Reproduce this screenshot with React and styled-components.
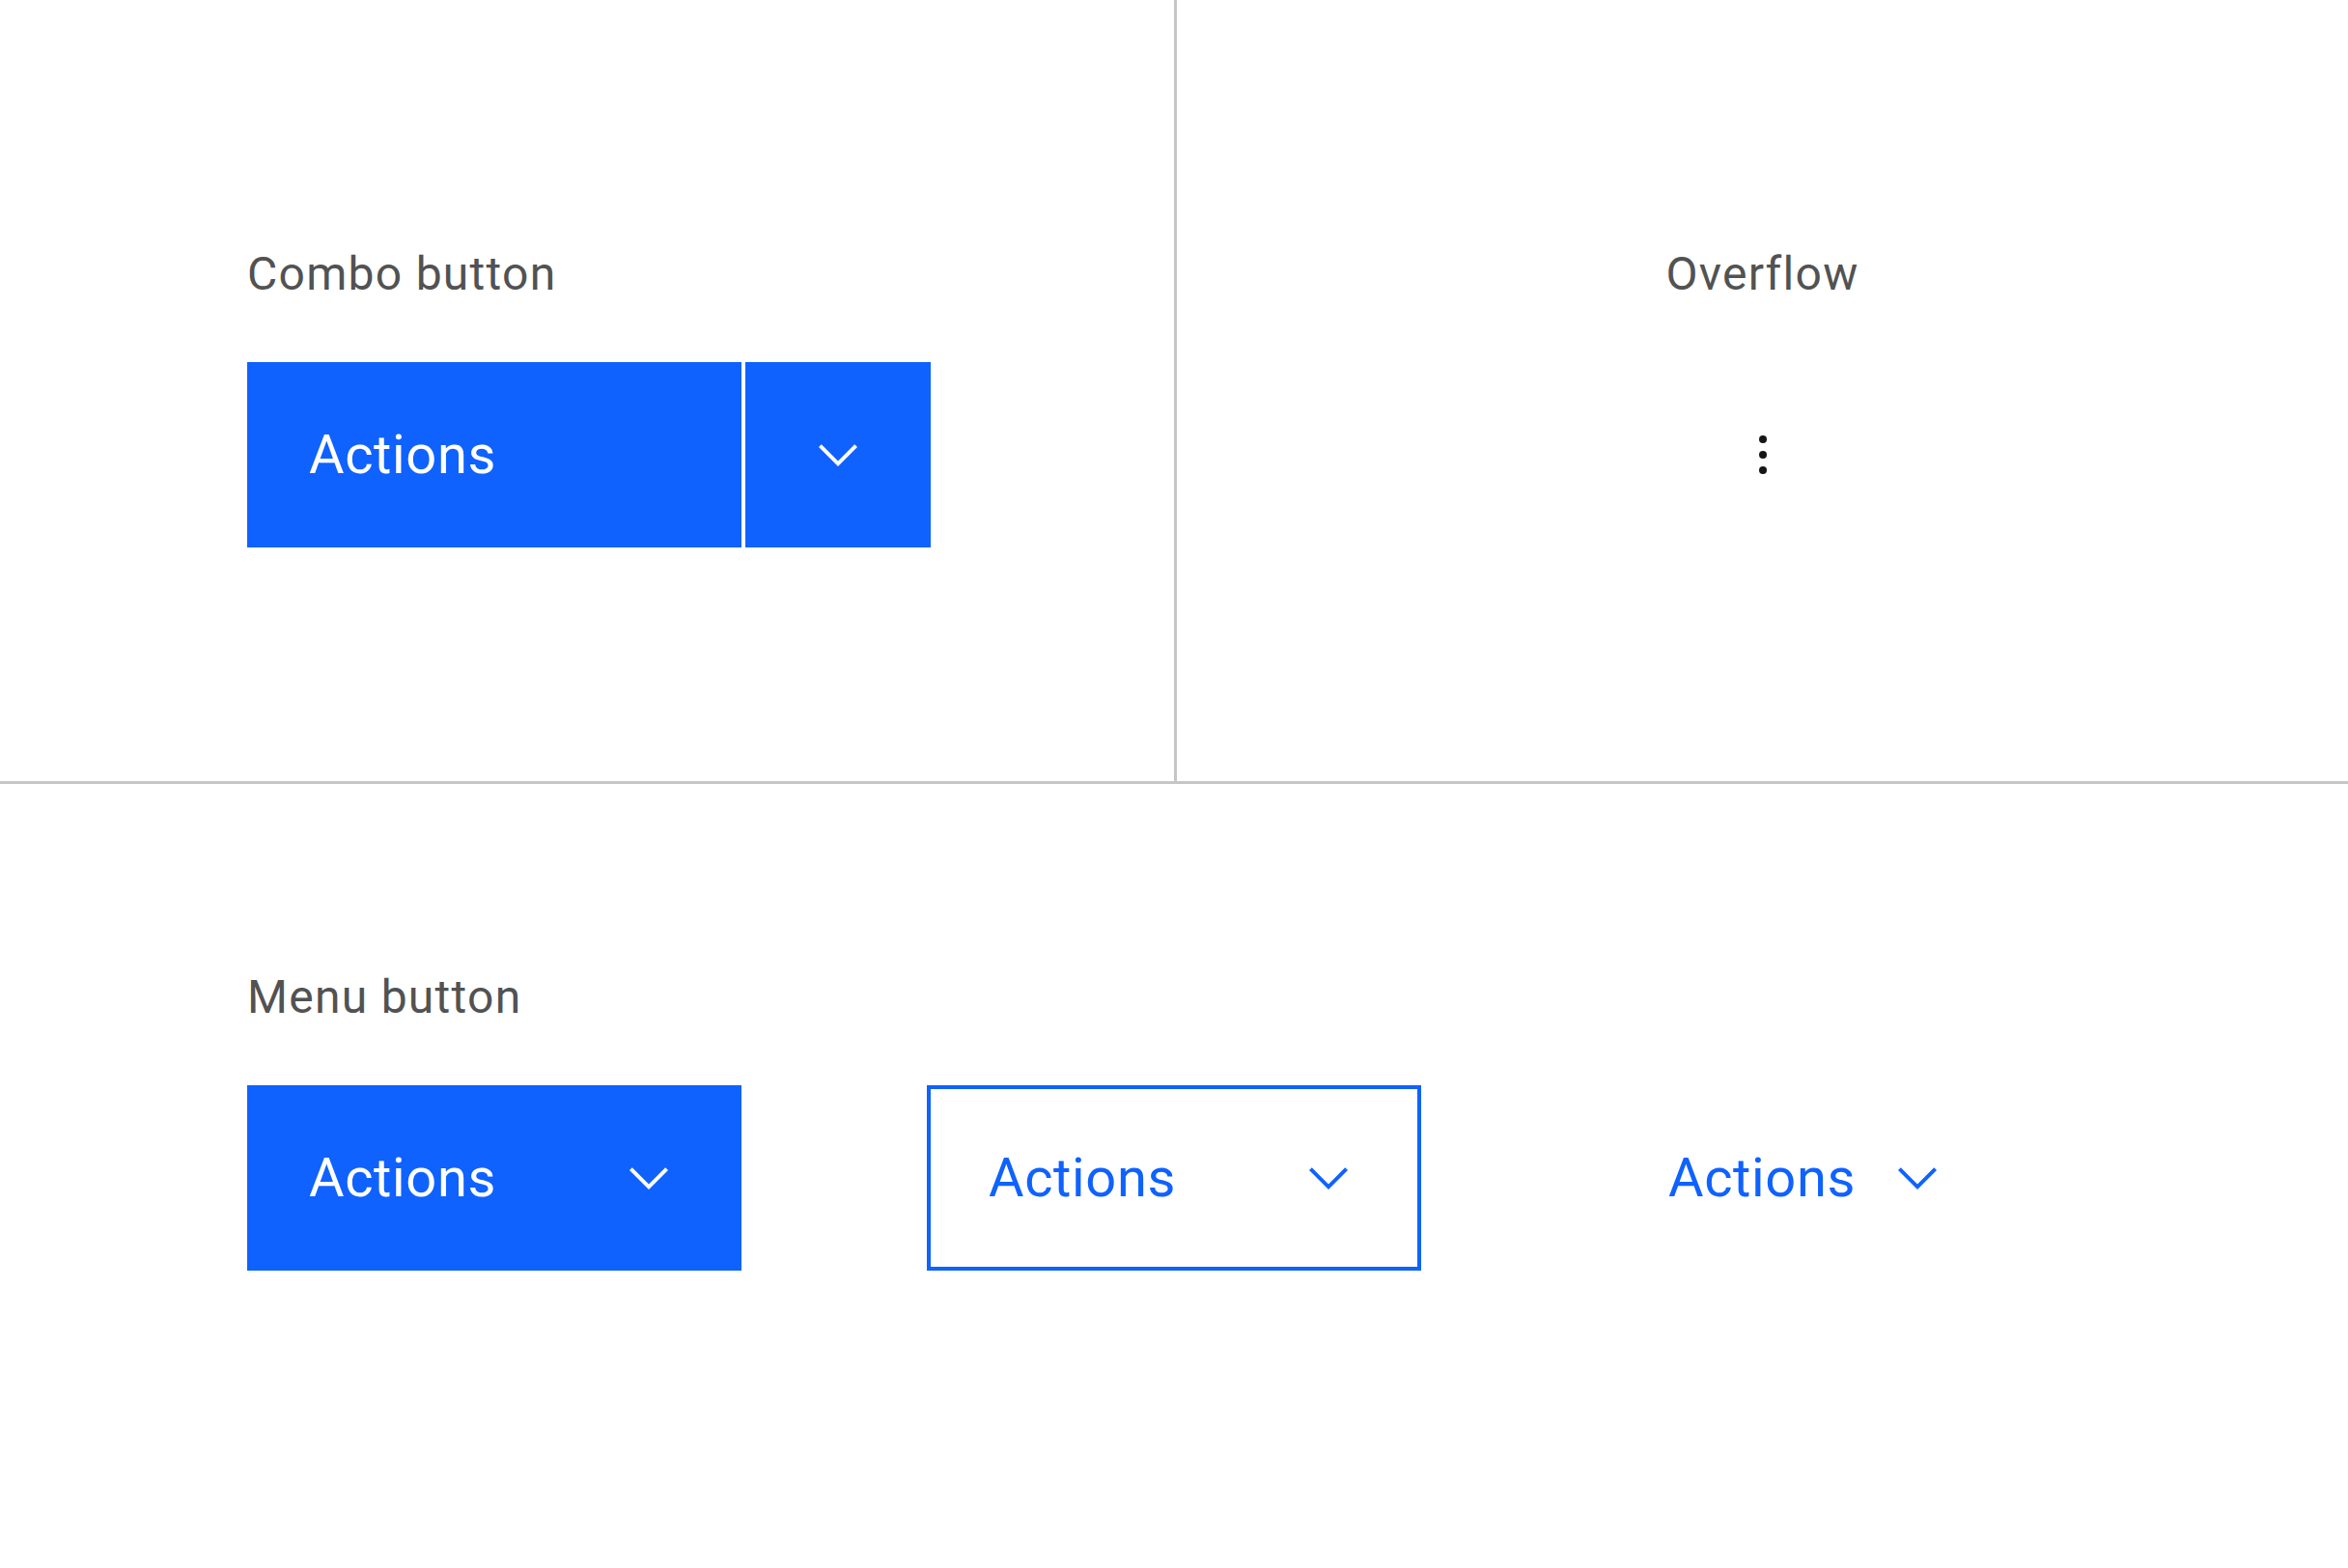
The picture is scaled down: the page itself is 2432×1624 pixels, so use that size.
import React from 'react';
import styled, { createGlobalStyle } from 'styled-components';

const GlobalStyle = createGlobalStyle`
  html, body {
    margin: 0;
    padding: 0;
    background: #ffffff;
  }
  body {
    font-family: Roboto, "Liberation Sans", sans-serif;
  }
  * {
    box-sizing: border-box;
  }
`;

const Page = styled.div`
  width: 2432px;
  height: 1624px;
  display: grid;
  grid-template-rows: 812px 812px;
  background: #ffffff;
`;

const TopRow = styled.div`
  display: grid;
  grid-template-columns: 1219px 1fr;
  border-bottom: 3px solid #c6c6c6;
`;

const Cell = styled.section`
  display: flex;
  flex-direction: column;
  align-items: ${props => (props.$center ? 'center' : 'flex-start')};
  padding-top: ${props => props.$top}px;
  padding-left: ${props => (props.$center ? 0 : 256)}px;
  border-right: ${props => (props.$divider ? '3px solid #c6c6c6' : 'none')};
`;

const Label = styled.div`
  font-size: 48px;
  line-height: 64px;
  letter-spacing: 1.28px;
  color: #525252;
  margin-bottom: 59px;
`;

const ButtonRow = styled.div`
  display: flex;
  align-items: center;
  gap: 192px;
`;

const Combo = styled.div`
  display: flex;
  gap: 4px;
`;

const Button = styled.button`
  height: 192px;
  width: ${props => (props.$width ? `${props.$width}px` : 'auto')};
  display: flex;
  align-items: center;
  justify-content: ${props => (props.$iconOnly ? 'center' : 'space-between')};
  gap: 32px;
  padding: 0 ${props => (props.$iconOnly ? 0 : 64)}px;
  margin: 0;
  font-family: Roboto, "Liberation Sans", sans-serif;
  font-size: 56px;
  font-weight: 400;
  letter-spacing: 0.64px;
  border-radius: 0;
  cursor: pointer;
  background: ${props => (props.$kind === 'primary' ? '#0f62fe' : 'transparent')};
  color: ${props => {
    if (props.$kind === 'primary') return '#ffffff';
    if (props.$kind === 'icon') return '#161616';
    return '#0f62fe';
  }};
  border: ${props => (props.$kind === 'tertiary' ? '4px solid #0f62fe' : 'none')};
  padding-left: ${props => (props.$iconOnly ? 0 : props.$kind === 'tertiary' ? 60 : 64)}px;
  padding-right: ${props => (props.$iconOnly ? 0 : props.$kind === 'tertiary' ? 60 : 64)}px;
`;

const Chevron = () => (
  <svg width="64" height="64" viewBox="0 0 16 16" fill="currentColor" aria-hidden="true">
    <path d="M8 11L3 6 3.7 5.3 8 9.6 12.3 5.3 13 6z" />
  </svg>
);

const OverflowIcon = () => (
  <svg width="64" height="64" viewBox="0 0 16 16" fill="currentColor" aria-hidden="true">
    <circle cx="8" cy="4" r="1" />
    <circle cx="8" cy="8" r="1" />
    <circle cx="8" cy="12" r="1" />
  </svg>
);

export default function App() {
  return (
    <>
      <GlobalStyle />
      <Page>
        <TopRow>
          <Cell $top={252} $divider>
            <Label>Combo button</Label>
            <Combo>
              <Button $kind="primary" $width={512}>Actions</Button>
              <Button $kind="primary" $width={192} $iconOnly aria-label="More actions">
                <Chevron />
              </Button>
            </Combo>
          </Cell>
          <Cell $top={252} $center>
            <Label>Overflow</Label>
            <Button $kind="icon" $width={192} $iconOnly aria-label="Options">
              <OverflowIcon />
            </Button>
          </Cell>
        </TopRow>
        <Cell $top={189}>
          <Label>Menu button</Label>
          <ButtonRow>
            <Button $kind="primary" $width={512}>
              Actions
              <Chevron />
            </Button>
            <Button $kind="tertiary" $width={512}>
              Actions
              <Chevron />
            </Button>
            <Button $kind="ghost">
              Actions
              <Chevron />
            </Button>
          </ButtonRow>
        </Cell>
      </Page>
    </>
  );
}
